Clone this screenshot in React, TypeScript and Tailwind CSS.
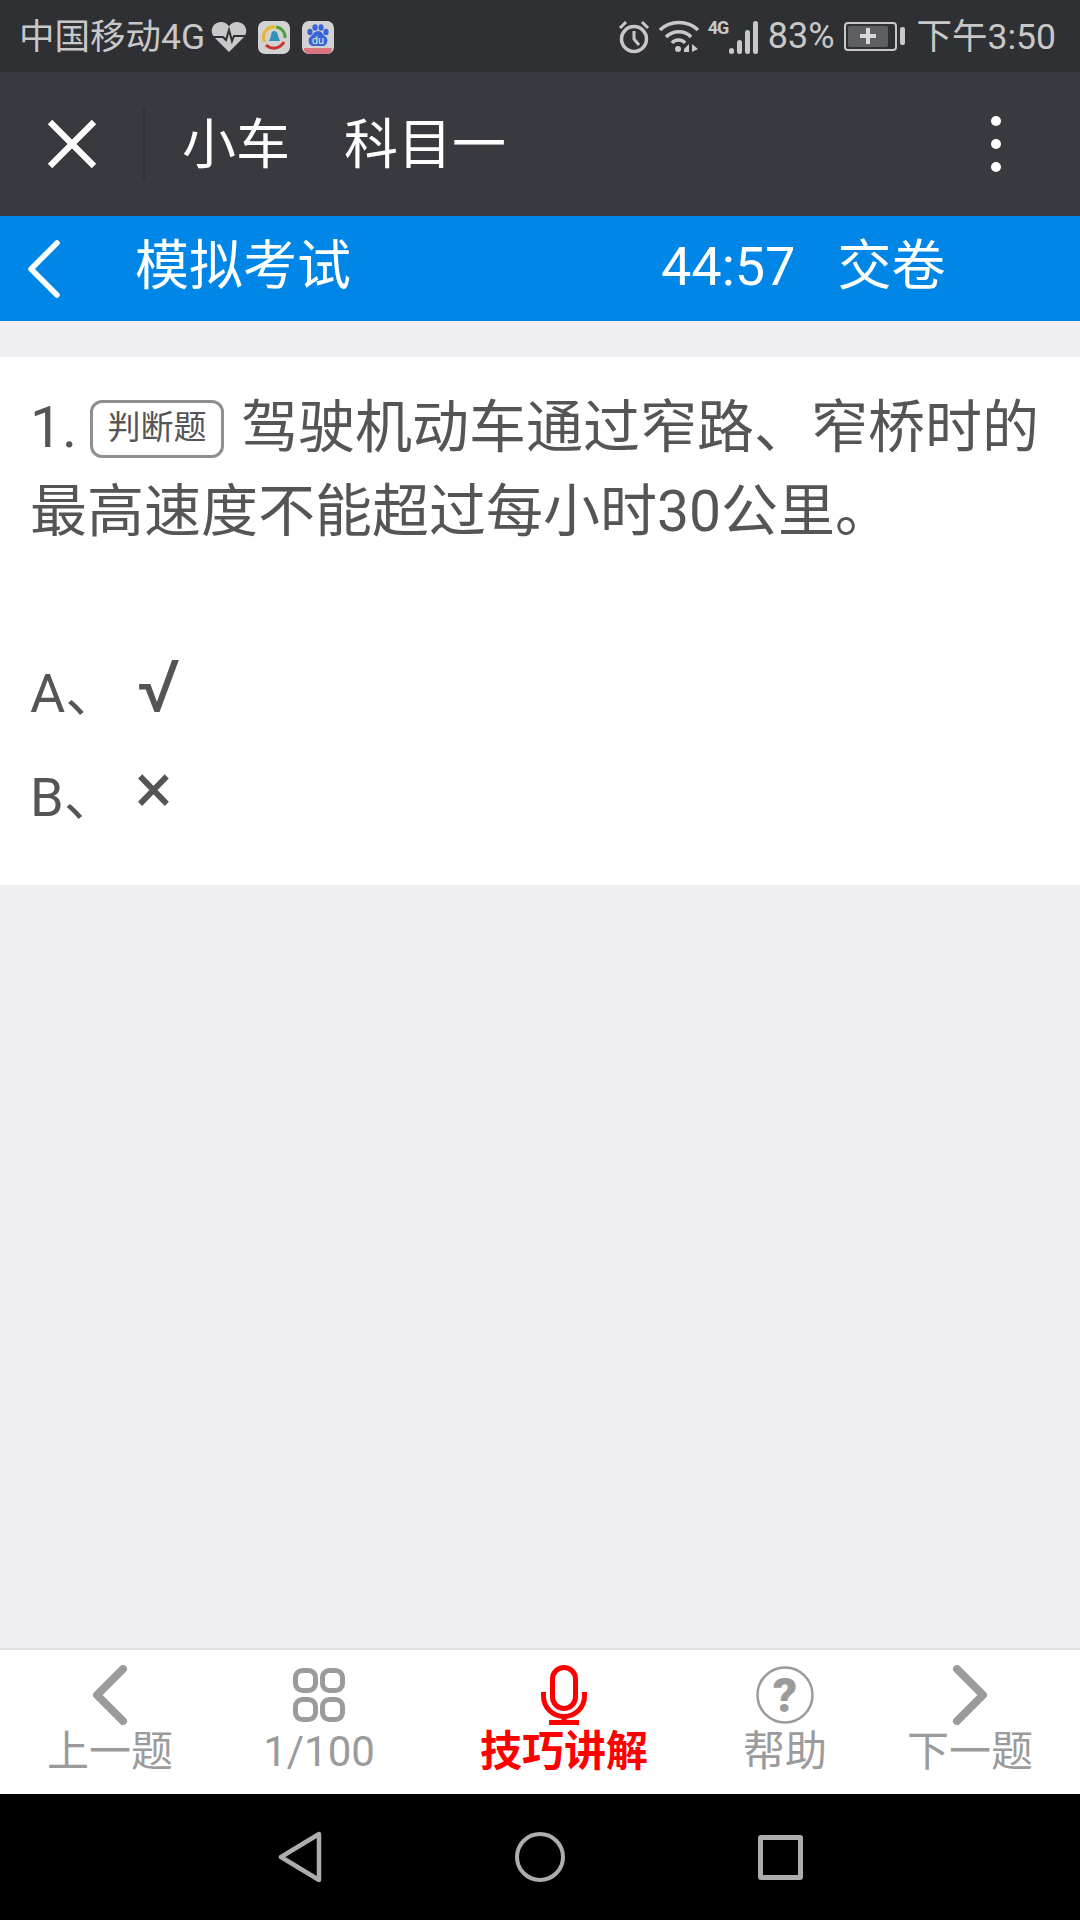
import { X } from 'lucide-react';

const cjk = "font-['Roboto','Noto_Sans_CJK_SC',sans-serif]";

function HeartIcon() {
  return (
    <svg width="36" height="32" viewBox="0 0 36 32">
      <path d="M18 31 L3 16 C-3 8 4 0 11 1 C14 1.5 16.5 3 18 5.5 C19.5 3 22 1.500 25 1 C32 0 39 8 33 16 Z" fill="#c8c8c8" />
      <path d="M1 16 H12 L15 19 L18 9 L21 20 L23 15 H35" fill="none" stroke="#2f3034" strokeWidth="2" />
    </svg>
  );
}

function NewsAppIcon() {
  return (
    <svg width="32" height="33" viewBox="0 0 32 33">
      <rect width="32" height="33" rx="7" fill="#d2d2d2" />
      <path d="M7 21 A10 10 0 0 1 17 6" fill="none" stroke="#e3b92b" strokeWidth="3" />
      <path d="M18 6 A10 10 0 0 1 27 17" fill="none" stroke="#4f9e45" strokeWidth="3" />
      <path d="M8 24 C13 29 22 28 26 21" fill="none" stroke="#c8372d" strokeWidth="3" />
      <path d="M16 10 C19 10 20 13 20 15 L22 20 H11 L13 15 C13 12 14 10 16 10 Z" fill="#2f93b8" />
    </svg>
  );
}

function BaiduAppIcon() {
  return (
    <svg width="32" height="33" viewBox="0 0 32 33">
      <rect width="32" height="33" rx="7" fill="#d2d2d2" />
      <path d="M2 27 H30 V28 A5 5 0 0 1 25 33 H7 A5 5 0 0 1 2 28 Z" fill="#d9757f" />
      <g fill="#3a63d6">
        <ellipse cx="8" cy="11" rx="2.600" ry="3.200" />
        <ellipse cx="13" cy="6.500" rx="2.600" ry="3.200" />
        <ellipse cx="19" cy="6.500" rx="2.600" ry="3.200" />
        <ellipse cx="24" cy="11" rx="2.600" ry="3.200" />
        <path d="M16 10 C20 10 21 14 24 16 C27 19 25 25 21 25 H11 C7 25 5 19 8 16 C11 14 12 10 16 10 Z" />
      </g>
      <text x="16" y="23" textAnchor="middle" fontSize="11" fontFamily="Roboto" fill="#e6e6e6">du</text>
    </svg>
  );
}

function AlarmIcon() {
  return (
    <svg width="32" height="34" viewBox="0 0 32 34" fill="none" stroke="#c8c8c8">
      <circle cx="16" cy="19" r="12.500" strokeWidth="3.500" />
      <path d="M16 11 V19 L21 25" strokeWidth="3" />
      <path d="M2 8 L8 2 M24 2 L30 8" strokeWidth="3" />
    </svg>
  );
}

function WifiIcon() {
  return (
    <svg width="40" height="34" viewBox="0 0 40 34">
      <g fill="none" stroke="#c8c8c8" strokeWidth="3.500">
        <path d="M1 11 C11 1 29 1 39 11" />
        <path d="M7 18 C14 11 26 11 32 18" />
        <path d="M13 24 C16 20 23 20 26 24" />
      </g>
      <circle cx="19" cy="30" r="3" fill="#c8c8c8" />
      <path d="M25 30 L30 25 V33 H25 Z M33 25 L39 30 L33 33 Z" fill="#c8c8c8" />
    </svg>
  );
}

function SignalIcon() {
  return (
    <div className="flex items-end gap-[3px] h-[34px] w-[33px]">
      <div className="w-[5px] h-[6px] rounded-full bg-[#c8c8c8]" />
      <div className="w-[5px] h-[14px] rounded-full bg-[#c8c8c8]" />
      <div className="w-[5px] h-[24px] rounded-full bg-[#c8c8c8]" />
      <div className="w-[5px] h-[33px] rounded-full bg-[#c8c8c8]" />
    </div>
  );
}

function BatteryIcon() {
  return (
    <div className="flex items-center gap-[3px]">
      <div className="w-[53px] h-[29px] rounded-[4px] border-2 border-[#c8c8c8] p-[2px] flex">
        <div className="w-[40px] h-full bg-[#5e5f63] rounded-[2px] flex items-center justify-center">
          <svg width="16" height="16" viewBox="0 0 16 16">
            <path d="M6 0 H10 V6 H16 V10 H10 V16 H6 V10 H0 V6 H6 Z" fill="#d8d8d8" />
          </svg>
        </div>
      </div>
      <div className="w-[5px] h-[18px] rounded-[2px] bg-[#c8c8c8]" />
    </div>
  );
}

function StatusBar() {
  return (
    <div className={`h-[72px] bg-[#2f3034] flex items-center pl-[19px] pr-[24px] text-[#c8c8c8] ${cjk}`}>
      <span className="mt-[3px] text-[35.500px] leading-none">中国移动4G</span>
      <div className="ml-[6px] mt-[2px]"><HeartIcon /></div>
      <div className="ml-[11px] mt-[2px]"><NewsAppIcon /></div>
      <div className="ml-[12px] mt-[2px]"><BaiduAppIcon /></div>
      <div className="ml-auto mt-[2px]"><AlarmIcon /></div>
      <div className="ml-[9px]"><WifiIcon /></div>
      <span className="ml-[9px] -mt-[16px] text-[18px] leading-none font-bold w-[21px] tracking-[-1px]">4G</span>
      <div className="mt-[2px]"><SignalIcon /></div>
      <span className="ml-[6px] -mt-[1px] text-[36px] leading-none">83%</span>
      <div className="ml-[9px]"><BatteryIcon /></div>
      <span className="ml-[12px] mt-[3px] text-[35.500px] leading-none">下午3:50</span>
    </div>
  );
}

function TitleBar() {
  return (
    <div className={`h-[144px] bg-[#393a3f] flex items-center text-white ${cjk}`}>
      <div className="w-[145px] h-[72px] flex items-center justify-center border-r-2 border-[#303135]">
        <X size={88} strokeWidth={1.700} strokeLinecap="butt" className="shrink-0" />
      </div>
      <span className="ml-[37px] mt-[3px] text-[54px] leading-none">小车</span>
      <span className="ml-[54px] mt-[3px] text-[54px] leading-none">科目一</span>
      <div className="ml-auto mr-[79px] flex flex-col gap-[13px]">
        <div className="w-[10px] h-[10px] rounded-full bg-white" />
        <div className="w-[10px] h-[10px] rounded-full bg-white" />
        <div className="w-[10px] h-[10px] rounded-full bg-white" />
      </div>
    </div>
  );
}

function ExamBar() {
  return (
    <div className={`h-[105px] bg-[#0086e6] flex items-center text-white ${cjk}`}>
      <svg width="36" height="58" viewBox="0 0 36 58" className="ml-[27px]" fill="none" stroke="white" strokeWidth="5.500" strokeLinecap="round" strokeLinejoin="round">
        <path d="M30 3 L4 29 L30 55" />
      </svg>
      <span className="ml-[72px] -mt-[4px] text-[54px] leading-none">模拟考试</span>
      <span className="ml-[310px] -mt-[4px] text-[54px] leading-none">44:57</span>
      <span className="ml-[42px] -mt-[4px] text-[54px] leading-none">交卷</span>
    </div>
  );
}

function Question() {
  return (
    <div className={`bg-white pt-[29px] pl-[30px] pr-[20px] h-[528px] text-[#555555] ${cjk}`}>
      <p className="text-[57px] leading-[84px] h-[168px]">
        1.
        <span className="inline-block align-[8px] ml-[13px] mr-[17px] w-[134px] h-[58px] rounded-[12px] border-[3px] border-[#8f8f8f] text-center text-[33px] leading-[49px]">判断题</span>
        驾驶机动车通过窄路、窄桥时的最高速度不能超过每小时30公里。
      </p>
      <div className="mt-[88px] flex items-center h-[104px] text-[54px]">
        <span className="w-[107px] leading-none">A、</span>
        <span className="text-[73px] leading-none -mt-[14px]">√</span>
      </div>
      <div className="flex items-center h-[104px] text-[54px]">
        <span className="w-[105px] leading-none">B、</span>
        <span className="text-[70px] leading-none -mt-[18px]">×</span>
      </div>
    </div>
  );
}

type TabProps = { width: string; icon: React.ReactNode; label: string; labelClass: string };

function Tab({ width, icon, label, labelClass }: TabProps) {
  return (
    <div className={`${width} flex flex-col items-center pt-[15px]`}>
      <div className="h-[60px] flex items-center justify-center">{icon}</div>
      <span className={labelClass}>{label}</span>
    </div>
  );
}

function BottomTabs() {
  const gray = 'mt-[3px] text-[42px] leading-[48px] text-[#9b9b9b]';
  return (
    <div className={`h-[146px] bg-white border-t-2 border-[#dfdfe2] flex ${cjk}`}>
      <Tab
        width="w-[220px]"
        label="上一题"
        labelClass={gray}
        icon={
          <svg width="36" height="60" viewBox="0 0 36 60" fill="none" stroke="#9b9b9b" strokeWidth="8" strokeLinecap="round" strokeLinejoin="round">
            <path d="M31 4 L5 30 L31 56" />
          </svg>
        }
      />
      <Tab
        width="w-[198px]"
        label="1/100"
        labelClass={gray}
        icon={
          <svg width="52" height="54" viewBox="0 0 52 54" fill="none" stroke="#9b9b9b" strokeWidth="5">
            <rect x="2.500" y="2.500" width="20" height="20" rx="7" />
            <rect x="29.500" y="2.500" width="20" height="20" rx="7" />
            <rect x="2.500" y="31.500" width="20" height="20" rx="7" />
            <rect x="29.500" y="31.500" width="20" height="20" rx="7" />
          </svg>
        }
      />
      <Tab
        width="w-[292px]"
        label="技巧讲解"
        labelClass="mt-[3px] text-[42px] leading-[48px] font-bold text-[#ff0000]"
        icon={
          <svg width="46" height="60" viewBox="0 0 46 60" fill="none" stroke="#ff0000" strokeWidth="5">
            <rect x="11.500" y="2.500" width="23" height="41" rx="11.500" />
            <path d="M2.500 27 V31 A20.500 20.500 0 0 0 43.500 31 V27" />
            <path d="M23 51 V56 M8 57.500 H38" />
          </svg>
        }
      />
      <Tab
        width="w-[150px]"
        label="帮助"
        labelClass={gray}
        icon={
          <svg width="58" height="60" viewBox="0 0 58 60">
            <circle cx="29" cy="30" r="27.500" fill="none" stroke="#9b9b9b" strokeWidth="2.500" />
            <text x="29" y="47" textAnchor="middle" fontSize="48" fontWeight="900" fontFamily="Roboto" fill="#9b9b9b">?</text>
          </svg>
        }
      />
      <Tab
        width="w-[220px]"
        label="下一题"
        labelClass={gray}
        icon={
          <svg width="36" height="60" viewBox="0 0 36 60" fill="none" stroke="#9b9b9b" strokeWidth="8" strokeLinecap="round" strokeLinejoin="round">
            <path d="M5 4 L31 30 L5 56" />
          </svg>
        }
      />
    </div>
  );
}

function NavBar() {
  return (
    <div className="h-[126px] bg-black flex items-center pl-[278px]">
      <svg width="44" height="52" viewBox="0 0 44 52" fill="none" stroke="#adadad" strokeWidth="4.500" strokeLinejoin="round">
        <path d="M3 26 L41 3 V49 Z" />
      </svg>
      <div className="ml-[193px] w-[50px] h-[50px] rounded-full border-[4px] border-[#adadad]" />
      <div className="ml-[193px] w-[45px] h-[45px] rounded-[3px] border-[5px] border-[#adadad]" />
    </div>
  );
}

export default function App() {
  return (
    <div className="w-[1080px] h-[1920px] flex flex-col bg-[#eeeef3] overflow-hidden">
      <StatusBar />
      <TitleBar />
      <ExamBar />
      <div className="h-[36px]" />
      <Question />
      <div className="flex-1" />
      <BottomTabs />
      <NavBar />
    </div>
  );
}
